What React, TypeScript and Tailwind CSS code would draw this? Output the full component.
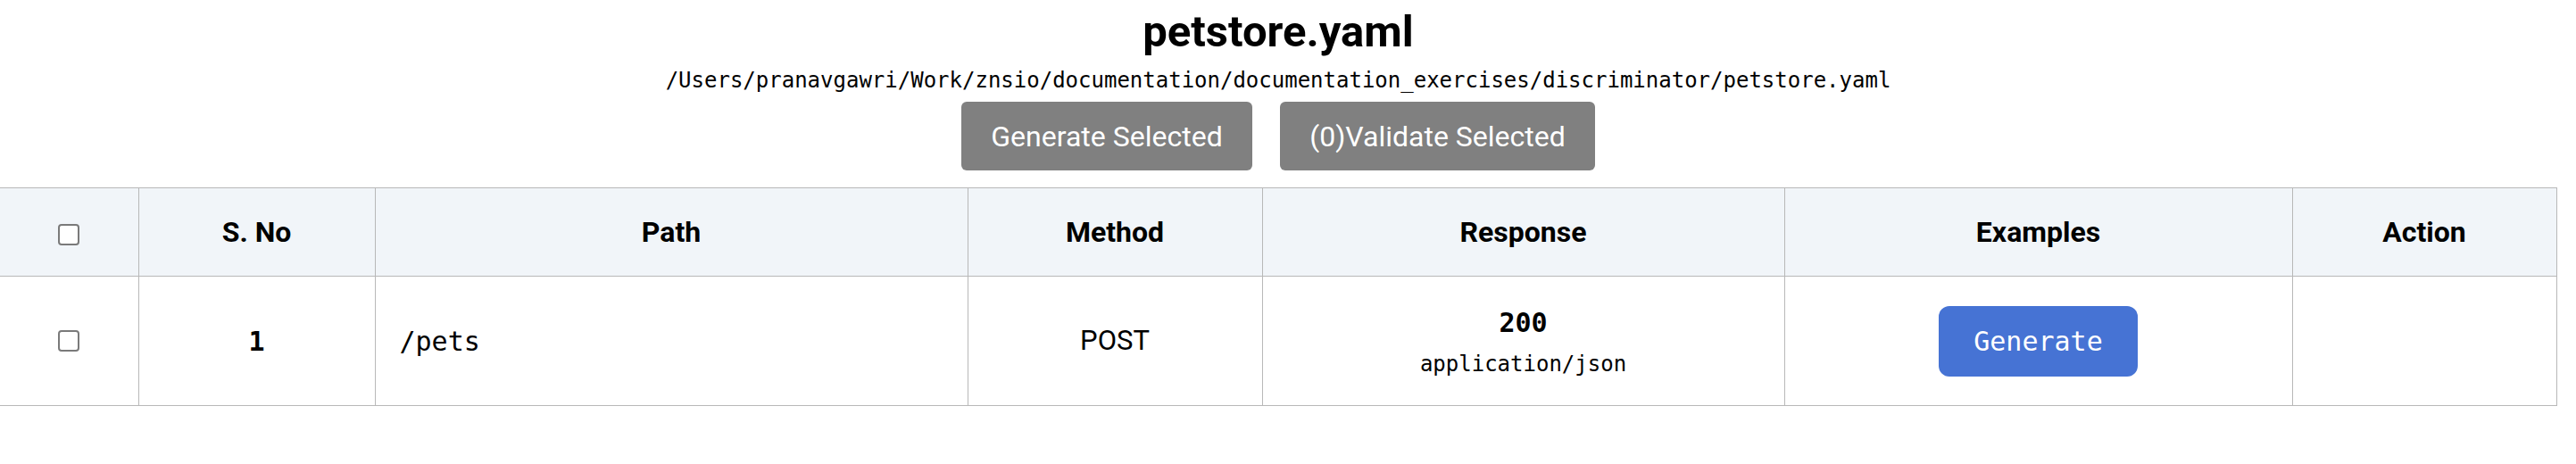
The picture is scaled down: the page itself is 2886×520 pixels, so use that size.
import React from "react";

const cols = ["w-[155px]", "w-[265px]", "w-[664px]", "w-[330px]", "w-[585px]", "w-[569px]", "w-[296px]"];

function Box() {
  return (
    <span className="inline-block h-[24px] w-[24px] rounded-[4px] border-2 border-[#7a7a7a] bg-white align-middle" />
  );
}

export default function App() {
  const sans = "font-['Roboto','Liberation_Sans',sans-serif]";
  const mono = "font-['DejaVu_Sans_Mono','Liberation_Mono',monospace]";
  const th = "border border-[#b8b8b8] text-[32px] font-bold text-black text-center";
  const td = "border border-[#b8b8b8] text-black text-center";

  return (
    <div className={`w-[2864px] bg-white text-center ${sans}`}>
      <h1 className="text-[49px] font-bold leading-[72px] text-black">petstore.yaml</h1>
      <p className={`${mono} mt-[4px] text-[24px] leading-[28px] text-black`}>
        /Users/pranavgawri/Work/znsio/documentation/documentation_exercises/discriminator/petstore.yaml
      </p>
      <div className="mt-[10px] flex justify-center gap-[31px]">
        <button className="h-[77px] w-[326px] rounded-[6px] bg-[#808080] text-[32px] text-white">Generate Selected</button>
        <button className="h-[77px] w-[353px] rounded-[6px] bg-[#808080] text-[32px] text-white">(0)Validate Selected</button>
      </div>

      <table className="mt-[19px] w-[2864px] table-fixed border-collapse">
        <colgroup>
          {cols.map((c, i) => (
            <col key={i} className={c} />
          ))}
        </colgroup>
        <thead className="bg-[#f1f5f9]">
          <tr className="h-[99px]">
            <th className={`${th} border-l-0`}>
              <Box />
            </th>
            <th className={th}>S. No</th>
            <th className={th}>Path</th>
            <th className={th}>Method</th>
            <th className={th}>Response</th>
            <th className={th}>Examples</th>
            <th className={th}>Action</th>
          </tr>
        </thead>
        <tbody>
          <tr className="h-[145px]">
            <td className={`${td} border-l-0`}>
              <Box />
            </td>
            <td className={`${td} ${mono} text-[30px] font-semibold`}>1</td>
            <td className={`${td} ${mono} text-[30px] text-left pl-[27px]`}>/pets</td>
            <td className={`${td} text-[31px] font-normal`}>POST</td>
            <td className={td}>
              <div className={`${mono} text-[30px] font-semibold leading-[40px]`}>200</div>
              <div className={`${mono} mt-[12px] text-[24px] font-medium leading-[28px]`}>application/json</div>
            </td>
            <td className={td}>
              <button className={`${mono} h-[79px] w-[223px] rounded-[12px] bg-[#4673d4] text-[30px] font-medium text-white`}>
                Generate
              </button>
            </td>
            <td className={td}></td>
          </tr>
        </tbody>
      </table>
    </div>
  );
}
